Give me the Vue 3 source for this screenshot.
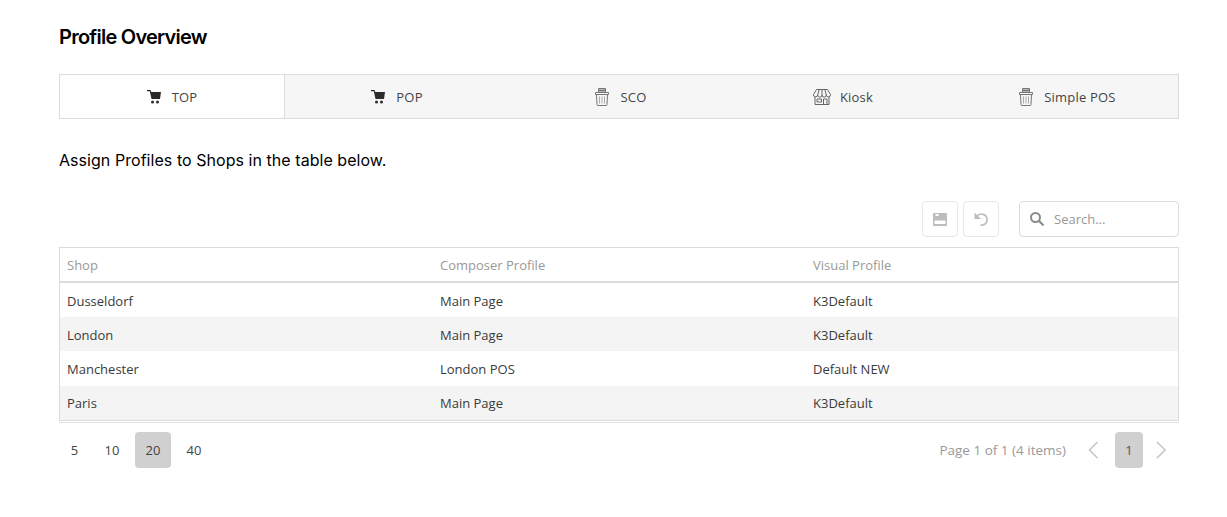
<script setup>
const tabs = [
  { label: 'TOP', icon: 'cart', active: true },
  { label: 'POP', icon: 'cart' },
  { label: 'SCO', icon: 'sco' },
  { label: 'Kiosk', icon: 'kiosk' },
  { label: 'Simple POS', icon: 'sco' },
]
const rows = [
  ['Dusseldorf', 'Main Page', 'K3Default'],
  ['London', 'Main Page', 'K3Default'],
  ['Manchester', 'London POS', 'Default NEW'],
  ['Paris', 'Main Page', 'K3Default'],
]
const sizes = [5, 10, 20, 40]
</script>

<template>
  <div class="page">
    <h1 class="title">Profile Overview</h1>

    <div class="tabs">
      <div v-for="t in tabs" :key="t.label" class="tab" :class="{ active: t.active, 'tab-kiosk': t.icon === 'kiosk' }">
        <svg v-if="t.icon === 'cart'" class="ico" viewBox="0 0 14 15" width="14" height="15">
          <path d="M0 1h3.500l.7 2H14l-1 7H4.500L2.800 2.200H0z" fill="#2b2b2b" />
          <circle cx="5.500" cy="13" r="1.500" fill="#2b2b2b" />
          <circle cx="10.500" cy="13" r="1.500" fill="#2b2b2b" />
        </svg>
        <svg v-else-if="t.icon === 'sco'" class="ico" viewBox="0 0 14 18" width="14" height="18" fill="none" stroke="#777" stroke-width="1">
          <path d="M3.500 4.500V.5h7v4" />
          <path d="M3.500 2.500h7" stroke-width="2" />
          <path d="M.5 4.500h13v2H.5z" />
          <path d="M1.500 6.500l.5 10a1 1 0 0 0 1 1h8a1 1 0 0 0 1-1l.5-10" />
          <path d="M4.500 8.500v7M7 8.500v7M9.500 8.500v7" stroke="#aaa" />
        </svg>
        <svg v-else class="ico" viewBox="0 0 18 16" width="18" height="16" fill="none" stroke="#666" stroke-width="1">
          <path d="M3.500.5h11l3 5a2 2 0 0 1-4.200.5 2.100 2.100 0 0 1-4.300 0 2.100 2.100 0 0 1-4.300 0A2 2 0 0 1 .5 5.500z" />
          <path d="M6 1L4.700 6M9 1v5M12 1l1.300 5" />
          <path d="M2 8v7.500h14V8" />
          <path d="M4 10h4.500v3H4zM10.500 15.500V10h3.500v5.500" />
        </svg>
        <span class="tab-label">{{ t.label }}</span>
      </div>
    </div>

    <p class="intro">Assign Profiles to Shops in the table below.</p>

    <div class="toolbar">
      <button class="tool" type="button" aria-label="Save">
        <svg viewBox="0 0 14 13" width="14" height="13">
          <path fill-rule="evenodd" d="M1 0h12a1 1 0 0 1 1 1v11a1 1 0 0 1-1 1H1a1 1 0 0 1-1-1V1a1 1 0 0 1 1-1zM2.500 1v2h3V1zM1.500 7.500V11h11V7.500z" fill="#bdbdbd" />
        </svg>
      </button>
      <button class="tool tool-undo" type="button" aria-label="Undo">
        <svg viewBox="0 0 14 14" width="14" height="14" fill="none">
          <path d="M3 4.500A5.500 5.500 0 1 1 6.500 13" stroke="#bdbdbd" stroke-width="1.800" />
          <path d="M.5 .5v6.500H7z" fill="#bdbdbd" />
        </svg>
      </button>
      <label class="search">
        <svg viewBox="0 0 14 14" width="14" height="14" fill="none" stroke="#8a8a8a" stroke-width="2">
          <circle cx="5.500" cy="5.500" r="4.500" />
          <path d="M8.800 8.800l4.700 4.700" />
        </svg>
        <span class="placeholder">Search...</span>
      </label>
    </div>

    <div class="table">
      <div class="row head">
        <div class="cell">Shop</div>
        <div class="cell">Composer Profile</div>
        <div class="cell">Visual Profile</div>
      </div>
      <div v-for="(r, i) in rows" :key="r[0]" class="row body" :class="{ alt: i % 2 === 1 }">
        <div v-for="c in r" :key="c" class="cell">{{ c }}</div>
      </div>
    </div>

    <div class="pager">
      <div class="sizes">
        <span v-for="s in sizes" :key="s" class="size" :class="{ on: s === 20 }">{{ s }}</span>
      </div>
      <div class="pages">
        <span class="info">Page 1 of 1 (4 items)</span>
        <svg class="chev" viewBox="0 0 12 18" width="12" height="18" fill="none" stroke="#c4c4c4" stroke-width="1.500"><path d="M10.500 1l-8 8 8 8" /></svg>
        <span class="num">1</span>
        <svg class="chev" viewBox="0 0 12 18" width="12" height="18" fill="none" stroke="#c4c4c4" stroke-width="1.500"><path d="M2 1l8 8-8 8" /></svg>
      </div>
    </div>
  </div>
</template>

<style scoped>
.page {
  width: 1120px;
  margin-left: 59px;
  padding-top: 24px;
  font-family: "Open Sans", "Liberation Sans", sans-serif;
  font-size: 13px;
  color: #3a3a3a;
}
.title {
  margin: 0;
  height: 26px;
  line-height: 26px;
  font-family: Inter, "Liberation Sans", sans-serif;
  font-size: 20px;
  font-weight: 600;
  letter-spacing: -0.75px;
  color: #000;
}
.tabs {
  display: grid;
  grid-template-columns: 225px 224px 224px 224px 1fr;
  margin-top: 24px;
  height: 45px;
  box-sizing: border-box;
  border: 1px solid #dcdcdc;
  background: #f6f6f6;
}
.tab {
  display: flex;
  align-items: center;
  justify-content: center;
  gap: 11px;
  color: #444;
}
.tab-label { letter-spacing: 0.2px; }
.tab.active {
  background: #fff;
  border-right: 1px solid #dcdcdc;
}
.tab-kiosk { padding-right: 4px; }
.tab-kiosk .ico { margin-right: -2px; }
.ico { flex: none; }
.intro {
  margin: 31px 0 0;
  height: 21px;
  line-height: 21px;
  font-family: Inter, "Liberation Sans", sans-serif;
  font-size: 16px;
  letter-spacing: 0.05px;
  color: #000;
}
.toolbar {
  display: flex;
  justify-content: flex-end;
  align-items: center;
  gap: 5px;
  margin-top: 30px;
}
.tool {
  width: 36px;
  height: 36px;
  padding: 0;
  display: flex;
  align-items: center;
  justify-content: center;
  background: #fff;
  border: 1px solid #e8e8e8;
  border-radius: 4px;
}
.tool-undo { margin-right: 15px; }
.search {
  display: flex;
  align-items: center;
  gap: 10px;
  box-sizing: border-box;
  width: 160px;
  height: 36px;
  padding-left: 10px;
  border: 1px solid #dcdcdc;
  border-radius: 4px;
}
.placeholder { color: #999; }
.table {
  margin-top: 10px;
  box-sizing: border-box;
  height: 174px;
  border: 1px solid #dcdcdc;
}
.row {
  display: grid;
  grid-template-columns: repeat(3, 373px);
  align-items: center;
}
.cell { padding-left: 7px; }
.head {
  height: 33px;
  border-bottom: 2px solid #dcdcdc;
  color: #999;
}
.body { height: 34.2px; padding-top: 1px; box-sizing: border-box; }
.alt { background: #f4f4f4; }
.pager {
  display: flex;
  justify-content: space-between;
  align-items: center;
  margin-top: 1px;
  padding-top: 9px;
  height: 36px;
  border-top: 1px solid #e2e2e2;
}
.sizes, .pages { display: flex; align-items: center; }
.size {
  width: 36px;
  height: 36px;
  margin-right: 5px;
  display: flex;
  align-items: center;
  justify-content: center;
  border-radius: 4px;
  color: #444;
}
.size:first-child { width: 31px; margin-right: 4px; }
.size.on { background: #d0d0d0; }
.info { color: #999; font-size: 13.5px; margin-right: 21px; }
.num {
  width: 28px;
  height: 36px;
  margin: 0 12px 0 16px;
  display: flex;
  align-items: center;
  justify-content: center;
  background: #d0d0d0;
  border-radius: 4px;
  color: #555;
}
.chev { flex: none; }
.pages { padding-right: 12px; }
</style>
